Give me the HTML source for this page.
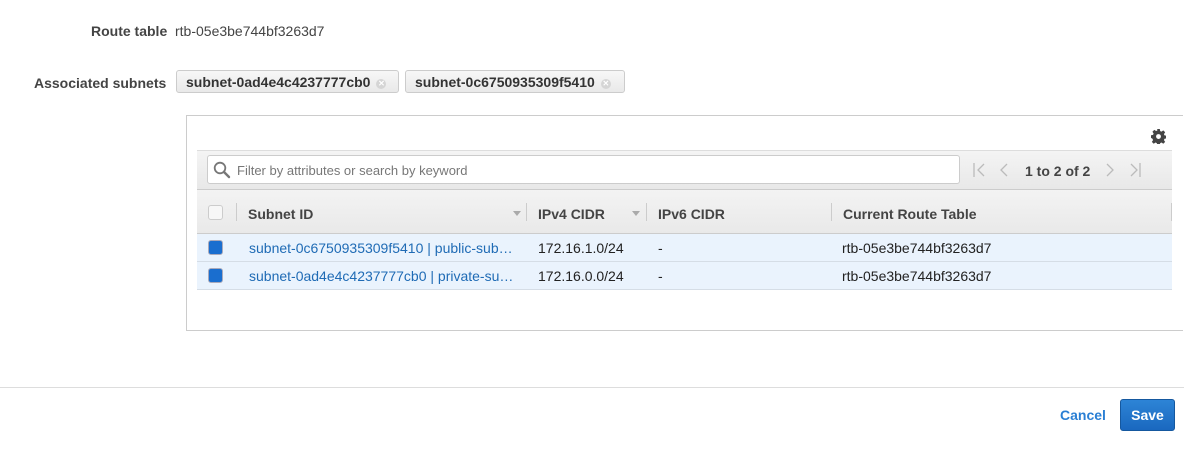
<!DOCTYPE html>
<html><head><style>
body{margin:0;width:1194px;height:461px;background:#fff;font-family:"Liberation Sans",Arial,sans-serif;font-size:14px;color:#444;position:relative;overflow:hidden}
.a{position:absolute;white-space:nowrap}
.tok{position:absolute;top:70px;height:23px;border:1px solid #ccc;border-radius:3px;background:linear-gradient(#f7f7f7,#e9e9e9);font-weight:bold;color:#333;line-height:22px;padding-left:9px;box-sizing:border-box}
.x{display:inline-block;width:10px;height:10px;border-radius:50%;background:#d5d5d5;color:#fff;font-size:8px;line-height:10px;text-align:center;vertical-align:1px;margin-left:6px}
.cb{position:absolute;left:208px;width:15px;height:15px;border-radius:3px;box-sizing:border-box}
.row{position:absolute;left:197px;width:975px;height:27px;background:#eaf3fd;border-bottom:1px solid #d5dde6}
.sep{position:absolute;top:203px;width:1px;height:18px;background:#ccc}
.h{position:absolute;top:206px;font-weight:bold;color:#444;font-size:14px}
.tri{position:absolute;top:211px;width:0;height:0;border-left:4px solid transparent;border-right:4px solid transparent;border-top:5px solid #aaa}
</style></head><body>
<div class="a" style="left:91px;top:23px;font-weight:bold;color:#444">Route table</div>
<div class="a" style="left:175px;top:23px;color:#444">rtb-05e3be744bf3263d7</div>
<div class="a" style="left:34px;top:75px;font-weight:bold;color:#444">Associated subnets</div>
<div class="tok" style="left:176px;width:223px">subnet-0ad4e4c4237777cb0<span class="x">✕</span></div>
<div class="tok" style="left:405px;width:220px">subnet-0c6750935309f5410<span class="x">✕</span></div>

<div class="a" style="left:186px;top:115px;width:997px;height:216px;border:1px solid #ccc;border-right:none;box-sizing:border-box"></div>
<svg class="a" style="left:1151px;top:129px" width="15" height="15" viewBox="0 0 16 16"><path fill="#444" d="M6.6 0h2.8l.4 2.2 1.4.6 1.9-1.3 2 2-1.3 1.9.6 1.4 2.2.4v2.8l-2.2.4-.6 1.4 1.3 1.9-2 2-1.9-1.3-1.4.6-.4 2.2H6.6l-.4-2.2-1.4-.6-1.9 1.3-2-2 1.3-1.9-.6-1.4L0 9.4V6.6l2.2-.4.6-1.4-1.3-1.9 2-2 1.9 1.3 1.4-.6z"/><circle cx="8" cy="8" r="2.6" fill="#fff"/></svg>

<div class="a" style="left:197px;top:150px;width:975px;height:40px;background:linear-gradient(#f4f4f4,#e8e8e8);border-top:1px solid #ddd;border-bottom:1px solid #ccc;box-sizing:border-box"></div>
<div class="a" style="left:207px;top:155px;width:753px;height:29px;background:#fff;border:1px solid #ccc;border-radius:3px;box-sizing:border-box"></div>
<svg class="a" style="left:213px;top:161px" width="18" height="18" viewBox="0 0 18 18"><circle cx="7" cy="7" r="5.3" fill="none" stroke="#777" stroke-width="1.8"/><path d="M11 11l5 5" stroke="#777" stroke-width="2.4" stroke-linecap="round"/></svg>
<div class="a" style="left:237px;top:163px;color:#777;font-size:13px">Filter by attributes or search by keyword</div>
<svg class="a" style="left:972px;top:162px" width="45" height="16" viewBox="0 0 45 16" fill="none" stroke="#bbb" stroke-width="1.3"><path d="M2 1v14M12 2L6 8l6 6M35 2l-6 6 6 6"/></svg>
<div class="a" style="left:1025px;top:163px;font-weight:bold;color:#444">1 to 2 of 2</div>
<svg class="a" style="left:1104px;top:162px" width="40" height="16" viewBox="0 0 40 16" fill="none" stroke="#bbb" stroke-width="1.3"><path d="M3 2l6 6-6 6M27 2l6 6-6 6M36 1v14"/></svg>

<div class="a" style="left:197px;top:190px;width:975px;height:44px;background:linear-gradient(#f3f3f3,#e9e9e9);border-bottom:1px solid #ccc;box-sizing:border-box"></div>
<div class="cb" style="top:205px;border:1px solid #ccc;background:#f7f7f7"></div>
<div class="sep" style="left:236px"></div><div class="h" style="left:248px">Subnet ID</div><div class="tri" style="left:513px"></div>
<div class="sep" style="left:526px"></div><div class="h" style="left:538px">IPv4 CIDR</div><div class="tri" style="left:632px"></div>
<div class="sep" style="left:646px"></div><div class="h" style="left:658px">IPv6 CIDR</div>
<div class="sep" style="left:831px"></div><div class="h" style="left:843px">Current Route Table</div>
<div class="sep" style="left:1171px"></div>

<div class="row" style="top:234px"></div>
<div class="row" style="top:262px"></div>
<div class="cb" style="top:240px;background:#1a6ecf;border:1px solid #aab"></div>
<div class="cb" style="top:268px;background:#1a6ecf;border:1px solid #aab"></div>
<div class="a" style="left:249px;top:240px;color:#1f6bb5">subnet-0c6750935309f5410 | public-sub…</div>
<div class="a" style="left:249px;top:268px;color:#1f6bb5">subnet-0ad4e4c4237777cb0 | private-su…</div>
<div class="a" style="left:538px;top:240px;color:#222">172.16.1.0/24</div>
<div class="a" style="left:538px;top:268px;color:#222">172.16.0.0/24</div>
<div class="a" style="left:658px;top:240px;color:#222">-</div>
<div class="a" style="left:658px;top:268px;color:#222">-</div>
<div class="a" style="left:842px;top:240px;color:#222">rtb-05e3be744bf3263d7</div>
<div class="a" style="left:842px;top:268px;color:#222">rtb-05e3be744bf3263d7</div>

<div class="a" style="left:0;top:387px;width:1184px;height:1px;background:#ddd"></div>
<div class="a" style="left:1060px;top:407px;font-weight:bold;color:#2a7fd4;font-size:14px">Cancel</div>
<div class="a" style="left:1120px;top:399px;width:55px;height:32px;background:linear-gradient(#2d84d6,#1a68bf);border:1px solid #15589f;border-radius:3px;box-sizing:border-box;color:#fff;font-weight:bold;font-size:14px;text-align:center;line-height:30px">Save</div>
</body></html>
